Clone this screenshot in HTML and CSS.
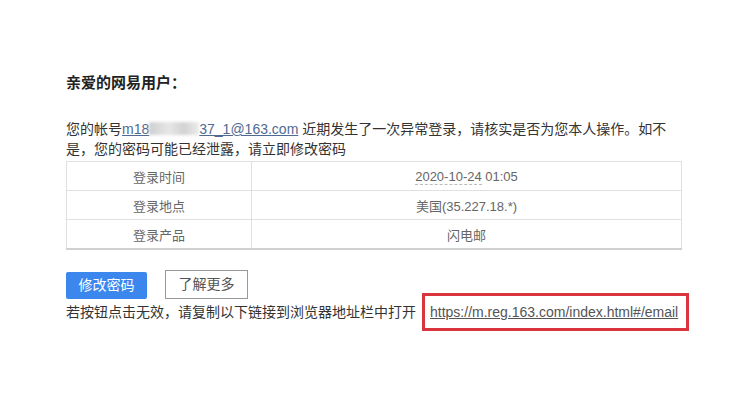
FILE: index.html
```html
<!DOCTYPE html>
<html lang="zh-CN">
<head>
    <meta charset="UTF-8">
    <title>网易帐号异常登录提醒</title>
    <link rel="stylesheet" href="styles.css">
</head>
<body>

<div class="mail">
    <h1 class="title">亲爱的网易用户：</h1>

    <p class="intro">
        您的帐号<a class="account" href="#">m18<span class="blur"></span>37_1@163.com</a> 近期发生了一次异常登录，请核实是否为您本人操作。如不是，您的密码可能已经泄露，请立即修改密码
    </p>

    <table class="login-table">
        <tr>
            <td class="label">登录时间</td>
            <td><span class="date">2020-10-24</span> 01:05</td>
        </tr>
        <tr>
            <td class="label">登录地点</td>
            <td>美国(35.227.18.*)</td>
        </tr>
        <tr>
            <td class="label">登录产品</td>
            <td>闪电邮</td>
        </tr>
    </table>

    <div class="actions">
        <a class="btn btn-primary" href="#">修改密码</a>
        <a class="btn btn-plain" href="#">了解更多</a>
    </div>

    <div class="fallback">
        <span>若按钮点击无效，请复制以下链接到浏览器地址栏中打开</span>
        <span class="link-box"><a href="#">https://m.reg.163.com/index.html#/email</a></span>
    </div>
</div>

</body>
</html>
```

FILE: styles.css
```css
body { margin: 0; background: #fff; color: #333; font-family: "Liberation Sans", "Noto Sans CJK SC", sans-serif; }

.mail { width: 616px; padding: 72px 0 0 66px; }

/* heading + intro */
.title { margin: 0; font-size: 15px; line-height: 22px; font-weight: bold; color: #222; }
.intro { margin: 25px 0 0; font-size: 14px; line-height: 20px; }
.account { color: #4f6a92; text-decoration: underline; }
.blur { display: inline-block; width: 50px; height: 13px; vertical-align: -1px; background: linear-gradient(90deg, #cfcfcf, #e6e6e6 40%, #d2d2d2 70%, #ececec); filter: blur(1.5px); }

/* login info table */
.login-table { width: 616px; margin-top: 2px; border-collapse: collapse; border: 1px solid #d6d6d6; border-bottom: 2px solid #d0d0d0; }
.login-table td { height: 28px; padding: 0; border: 1px solid #e0e0e0; text-align: center; font-size: 13px; color: #666; }
.login-table .label { width: 184px; }
.date { border-bottom: 1px dashed #bbb; }

/* buttons */
.actions { display: flex; align-items: flex-end; gap: 18px; margin-top: 20px; }
.btn { display: block; font-size: 14px; text-decoration: none; text-align: center; box-sizing: border-box; }
.btn-primary { width: 81px; height: 27px; line-height: 27px; background: #3b87ee; color: #fff; border-radius: 2px; }
.btn-plain { width: 83px; height: 29px; line-height: 27px; border: 1px solid #999; color: #555; }

/* fallback link */
.fallback { display: flex; align-items: center; margin-top: -6px; font-size: 14px; line-height: 20px; white-space: nowrap; }
.link-box { margin-left: 6px; padding: 8px 8px 8px 5px; line-height: 16px; border: 3px solid #d8353c; }
.link-box a { color: #555; text-decoration: underline; }
```
